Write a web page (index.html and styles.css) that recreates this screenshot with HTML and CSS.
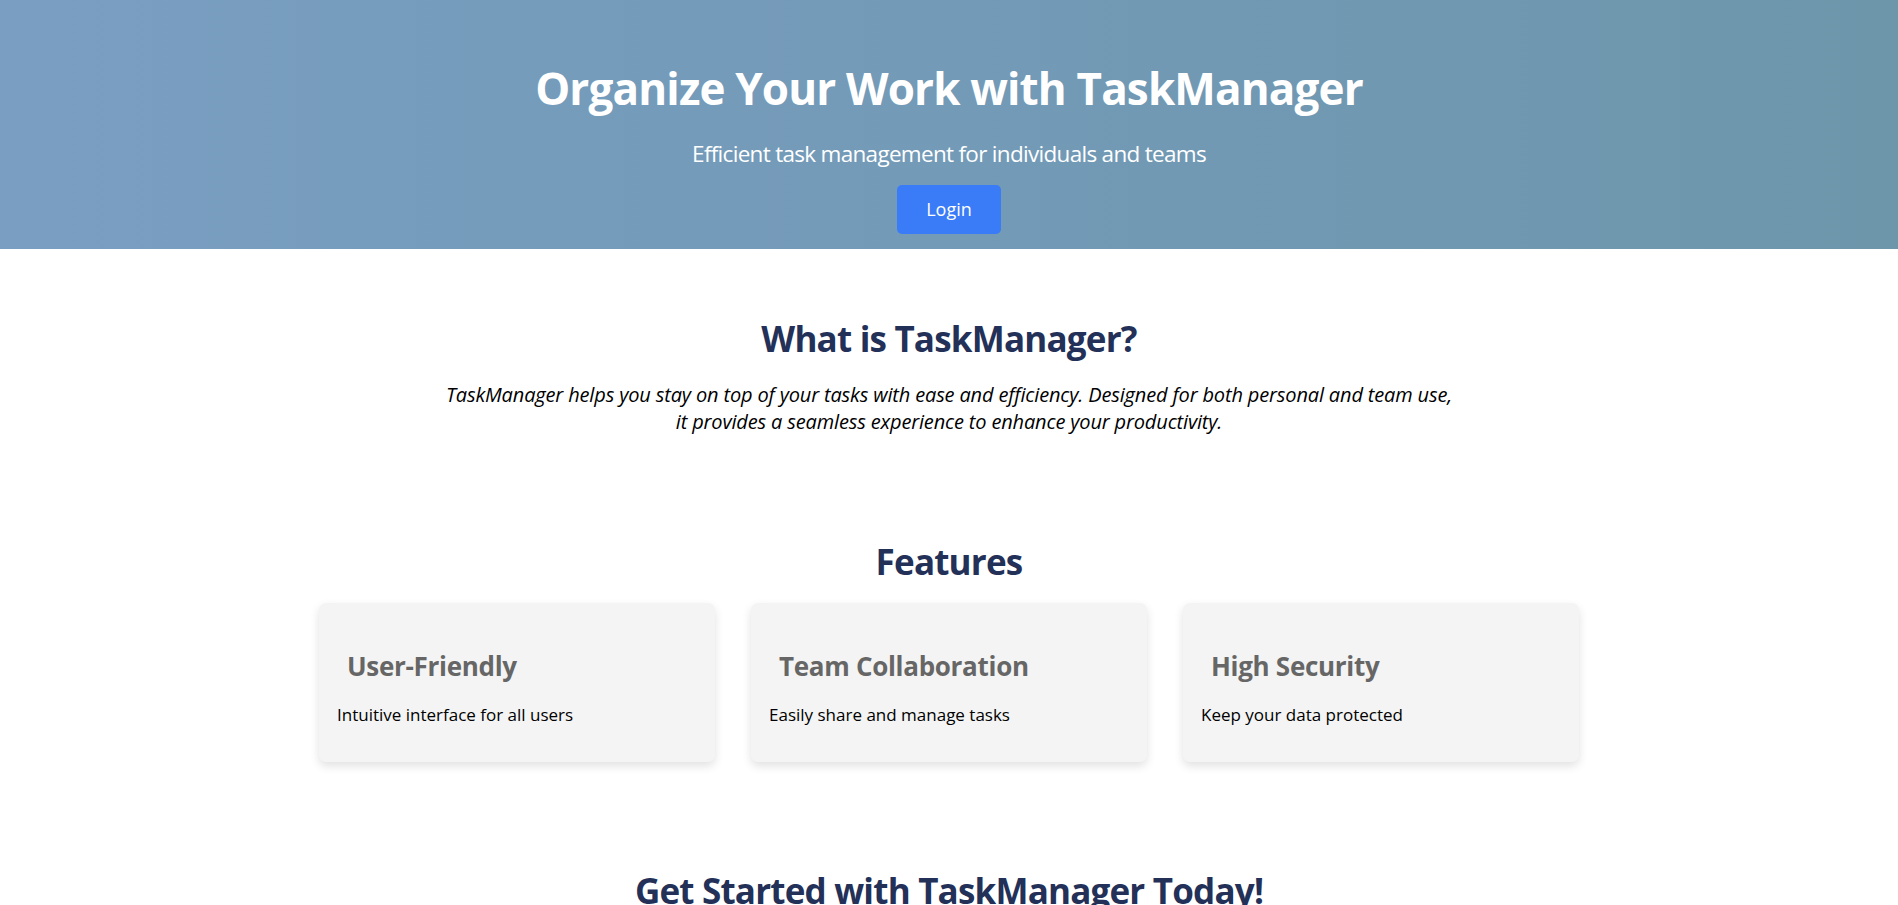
FILE: index.html
```html
<!DOCTYPE html>
<html lang="en">
<head>
<meta charset="utf-8">
<title>TaskManager</title>
<link rel="stylesheet" href="styles.css">
</head>
<body>
<header class="hero">
  <h1 class="hero-title">Organize Your Work with TaskManager</h1>
  <p class="hero-sub">Efficient task management for individuals and teams</p>
  <a class="btn-login" href="#">Login</a>
</header>
<main>
  <section class="about">
    <h2 class="section-title">What is TaskManager?</h2>
    <p class="about-text">TaskManager helps you stay on top of your tasks with ease and efficiency. Designed for both personal and team use, it provides a seamless experience to enhance your productivity.</p>
  </section>
  <section class="features">
    <h2 class="section-title">Features</h2>
    <div class="feature-grid">
      <div class="card">
        <h3 class="card-title">User-Friendly</h3>
        <p class="card-text">Intuitive interface for all users</p>
      </div>
      <div class="card">
        <h3 class="card-title">Team Collaboration</h3>
        <p class="card-text">Easily share and manage tasks</p>
      </div>
      <div class="card">
        <h3 class="card-title">High Security</h3>
        <p class="card-text">Keep your data protected</p>
      </div>
    </div>
  </section>
  <section class="cta">
    <h2 class="section-title">Get Started with TaskManager Today!</h2>
  </section>
</main>
</body>
</html>
```
FILE: styles.css
```css
* { box-sizing: border-box; }
body {
  margin: 0;
  font-family: "Open Sans", "Noto Sans", sans-serif;
  color: #000;
  background: #fff;
}
.hero {
  background: linear-gradient(to right, #799ec2, #6d96ab);
  color: #fff;
  text-align: center;
  padding: 60px 20px 15px;
}
.hero-title {
  margin: 0 0 22px;
  font-size: 44px;
  line-height: 56px;
  font-weight: 700;
  letter-spacing: -0.85px;
}
.hero-sub {
  margin: 0 0 16px;
  font-size: 22.5px;
  line-height: 31px;
  letter-spacing: -0.7px;
}
.btn-login {
  display: inline-block;
  background: #3a7cf7;
  color: #fff;
  text-decoration: none;
  font-size: 18px;
  line-height: 25px;
  padding: 12px 29px;
  border-radius: 5px;
}
.section-title {
  margin: 0;
  font-size: 35px;
  line-height: 42px;
  font-weight: 700;
  color: #233058;
  text-align: center;
  letter-spacing: -0.8px;
}
.about {
  padding-top: 69px;
  text-align: center;
}
.about-text {
  margin: 22px auto 0;
  max-width: 1013px;
  font-size: 20px;
  line-height: 26.7px;
  font-style: italic;
  letter-spacing: -0.15px;
}
.features {
  padding-top: 106px;
}
.feature-grid {
  display: grid;
  grid-template-columns: repeat(3, 1fr);
  gap: 36px;
  width: 1260px;
  margin: 20px auto 0;
}
.card {
  background: #f4f4f4;
  border-radius: 7px;
  box-shadow: 0 4px 10px rgba(0, 0, 0, 0.12);
  padding: 46px 18px 36px;
}
.card-title {
  margin: 0 0 19px;
  padding-left: 10px;
  font-size: 26px;
  line-height: 35px;
  font-weight: 700;
  color: #666;
  letter-spacing: -0.3px;
}
.card-text {
  margin: 0;
  font-size: 17px;
  line-height: 23px;
}
.cta {
  padding-top: 108px;
}
```
